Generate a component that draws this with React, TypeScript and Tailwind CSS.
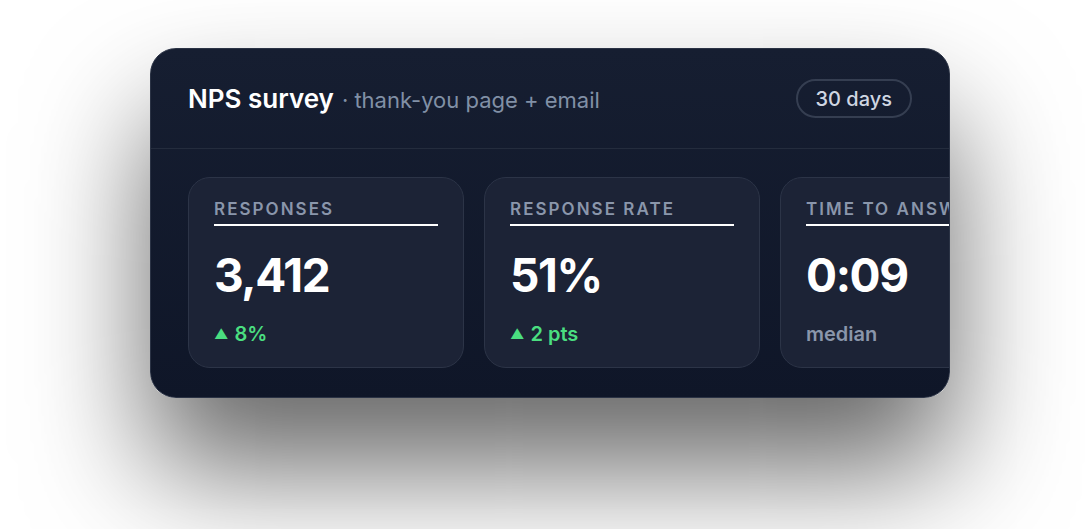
import React from 'react';

type Stat = {
  label: string;
  value: string;
  note: string;
  up?: boolean;
};

const stats: Stat[] = [
  { label: 'Responses', value: '3,412', note: '8%', up: true },
  { label: 'Response rate', value: '51%', note: '2 pts', up: true },
  { label: 'Time to answer', value: '0:09', note: 'median' },
];

function StatTile({ stat }: { stat: Stat }) {
  return (
    <div className="w-[276px] shrink-0 h-[191px] rounded-[22px] border border-[#2c3447] bg-[#1c2336] px-[25px] pt-[21px] flex flex-col">
      <div className="pb-[5px] border-b-2 border-white text-[17px] leading-[20px] font-semibold uppercase tracking-[0.12em] text-[#8a96ab] whitespace-nowrap overflow-hidden">
        {stat.label}
      </div>
      <div className="mt-[23px] text-[46px] leading-[52px] font-bold tracking-[-0.03em] text-white">
        {stat.value}
      </div>
      {stat.up ? (
        <div className="mt-[21px] h-[24px] flex items-center gap-[6px] text-[20px] leading-[24px] font-semibold text-[#4ade80]">
          <span className="text-[14px] leading-none">▲</span>
          <span>{stat.note}</span>
        </div>
      ) : (
        <div className="mt-[21px] text-[20px] leading-[24px] font-semibold text-[#8a96ab]">{stat.note}</div>
      )}
    </div>
  );
}

export default function App() {
  return (
    <div className="min-h-screen bg-white pt-[48px] pl-[150px]" style={{ fontFamily: 'Inter, "Noto Sans", sans-serif' }}>
      <div className="w-[800px] overflow-hidden rounded-[26px] border border-[#2b3345] bg-gradient-to-b from-[#161e31] to-[#0f1628] shadow-[0_70px_120px_rgba(0,0,0,0.6)]">
        {/* header */}
        <div className="h-[100px] px-[37px] flex items-center justify-between border-b border-[#242c3d]">
          <div className="flex items-baseline gap-[8px] whitespace-nowrap">
            <span className="text-[26px] font-semibold text-white">NPS survey</span>
            <span className="text-[22px] text-[#8190a6]">· thank-you page + email</span>
          </div>
          <div className="h-[39px] px-[18px] rounded-full border-2 border-[#353e51] flex items-center text-[20px] font-medium text-[#cfd6e2]">
            30 days
          </div>
        </div>

        {/* stats */}
        <div className="pt-[28px] pb-[29px] pl-[37px] flex gap-[20px]">
          {stats.map((s) => (
            <StatTile key={s.label} stat={s} />
          ))}
        </div>
      </div>
    </div>
  );
}
